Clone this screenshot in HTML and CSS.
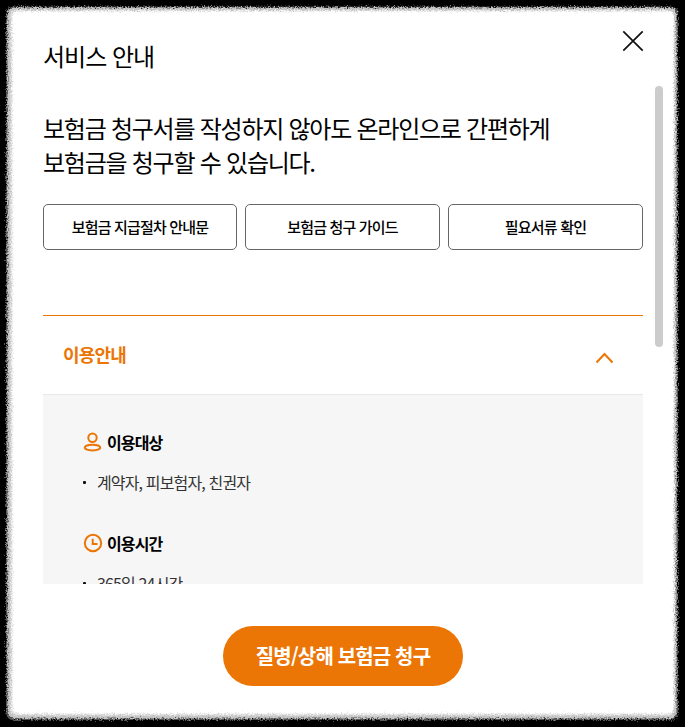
FILE: index.html
```
<!DOCTYPE html>
<html lang="ko">
<head>
<meta charset="utf-8">
<title>서비스 안내</title>
<link rel="stylesheet" href="styles.css">
</head>
<body>
<svg class="paper" width="685" height="727" viewBox="0 0 685 727" aria-hidden="true">
  <defs>
    <filter id="rough" filterUnits="userSpaceOnUse" x="0" y="0" width="685" height="727" color-interpolation-filters="sRGB">
      <feTurbulence type="fractalNoise" baseFrequency="0.7" numOctaves="2" seed="4" result="n"/>
      <feDisplacementMap in="SourceGraphic" in2="n" scale="6" xChannelSelector="R" yChannelSelector="G"/>
      <feGaussianBlur stdDeviation="0.45"/>
    </filter>
  </defs>
  <g filter="url(#rough)">
    <rect x="6" y="6.500" width="672" height="713.500" rx="7" fill="#555"/>
    <rect x="7.500" y="7.500" width="669" height="711" rx="7" fill="#c4c4c4"/>
    <rect x="10.500" y="10" width="664" height="705.500" rx="6" fill="#e2e2e2"/>
    <rect x="12.500" y="11.500" width="661" height="702" rx="5" fill="#fff"/>
  </g>
  <rect x="16" y="16" width="653" height="693" rx="3" fill="#fff"/>
</svg>
<main class="dialog">
  <header class="top">
    <h1>서비스 안내</h1>
    <button class="close" aria-label="닫기"><svg width="22" height="22" viewBox="0 0 22 22"><path d="M1.300 1.300 20.700 20.700M20.700 1.300 1.300 20.700" fill="none" stroke="#111" stroke-width="1.700"/></svg></button>
  </header>
  <div class="viewport">
    <section class="content">
      <p class="lead">보험금 청구서를 작성하지 않아도 온라인으로 간편하게<br>보험금을 청구할 수 있습니다.</p>
      <div class="links"><button>보험금 지급절차 안내문</button><button>보험금 청구 가이드</button><button>필요서류 확인</button></div>
      <div class="accordion">
        <h2>이용안내</h2>
        <svg width="18" height="12" viewBox="0 0 18 12"><path d="M1.500 10.500 9.500 2 17.500 10.500" fill="none" stroke="#eb7505" stroke-width="2"/></svg>
      </div>
      <div class="details">
        <h3><svg width="20" height="20" viewBox="0 0 20 20"><g fill="none" stroke="#eb7505" stroke-width="2"><circle cx="9.500" cy="5.700" r="4.200"/><ellipse cx="9.500" cy="15.600" rx="7.700" ry="2.800"/></g></svg>이용대상</h3>
        <ul><li>계약자, 피보험자, 친권자</li></ul>
        <h3><svg width="20" height="20" viewBox="0 0 20 20"><g fill="none" stroke="#eb7505" stroke-width="2"><circle cx="10" cy="10" r="8.200"/><path d="M9.700 5.800V10.900H14.500"/></g></svg>이용시간</h3>
        <ul><li>365일 24시간</li></ul>
      </div>
    </section>
    <div class="track"><div class="thumb"></div></div>
  </div>
  <footer><button class="claim">질병/상해 보험금 청구</button></footer>
</main>
</body>
</html>
```
FILE: styles.css
```
* { box-sizing: border-box; margin: 0; padding: 0; }
body {
  position: relative;
  width: 685px;
  height: 727px;
  overflow: hidden;
  background: #000;
  color: #000;
  font-family: "Noto Sans CJK KR", sans-serif;
}
button { font-family: inherit; color: inherit; border: 0; background: none; }
svg { display: block; flex: none; }
.paper { position: absolute; left: 0; top: 0; }
.dialog { position: relative; height: 727px; padding: 30px 22px 0 43px; display: flex; flex-direction: column; }
.top { height: 56px; padding-right: 20px; display: flex; justify-content: space-between; align-items: flex-start; }
h1 { font-size: 24px; line-height: 34px; font-weight: 400; margin-top: 9px; letter-spacing: -1px; }
.close { width: 22px; height: 22px; margin-right: -1px; }
.viewport { height: 498px; display: flex; justify-content: space-between; overflow: hidden; }
.content { width: 600px; }
.lead { padding-top: 25px; font-size: 24px; line-height: 34px; letter-spacing: -1.25px; white-space: nowrap; }
.links { display: grid; grid-template-columns: 194px 195px 195px; gap: 8px; margin-top: 25px; }
.links button { height: 46px; padding-bottom: 2px; border: 1px solid #666; border-radius: 5px; font-size: 15px; font-weight: 500; letter-spacing: -0.82px; }
.accordion {
  height: 79px;
  margin-top: 65px;
  padding: 0 30px 2px 20px;
  display: flex;
  align-items: center;
  justify-content: space-between;
  border-top: 1px solid #eb7505;
}
.accordion svg { margin-top: 7px; }
h2 { font-size: 18px; line-height: 26px; font-weight: 700; letter-spacing: -0.85px; color: #eb7505; }
.details { height: 300px; padding: 35px 40px; border-top: 1px solid #e8e8e8; background: #f6f6f6; }
h3 { display: flex; align-items: center; gap: 4px; font-size: 16px; line-height: 24px; font-weight: 700; letter-spacing: -0.85px; }
ul { list-style: none; margin: 16px 0 37px; }
li { display: flex; align-items: center; font-size: 16px; line-height: 24px; letter-spacing: -0.85px; color: #333; }
li::before { content: ""; width: 3px; height: 3px; margin-right: 11px; border-radius: 1px; background: #111; }
.track { width: 8px; }
.thumb { height: 261px; border-radius: 4px; background: #ccc; }
footer { padding: 42px 20px 0 0; display: flex; justify-content: center; }
.claim { width: 240px; height: 60px; padding-bottom: 1px; border-radius: 30px; background: #eb7505; color: #fff; font-size: 20px; font-weight: 700; letter-spacing: -0.85px; }
```
